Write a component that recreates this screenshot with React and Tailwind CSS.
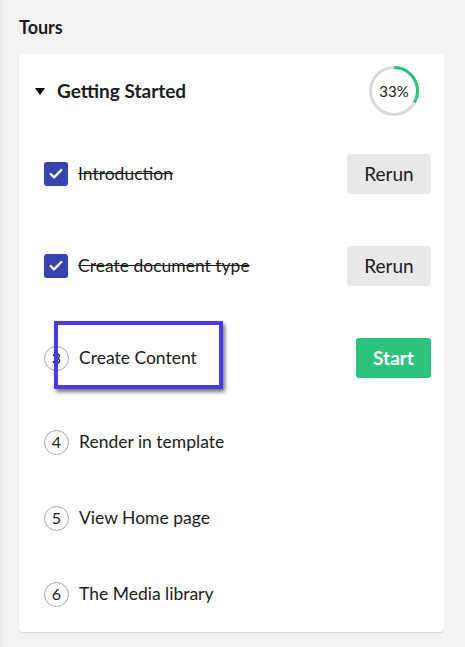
import { Check } from 'lucide-react';

const STEPS = [
  { n: 1, name: 'Introduction', done: true },
  { n: 2, name: 'Create document type', done: true },
  { n: 3, name: 'Create Content', next: true },
  { n: 4, name: 'Render in template' },
  { n: 5, name: 'View Home page' },
  { n: 6, name: 'The Media library' },
];

const Progress = ({ pct }) => {
  const r = 23.5;
  const c = 2 * Math.PI * r;
  return (
    <div className="relative w-[50px] h-[50px]">
      <svg width="50" height="50" viewBox="0 0 50 50" className="absolute inset-0 -rotate-90">
        <circle cx="25" cy="25" r={r} fill="none" stroke="#d8d7d9" strokeWidth="3" />
        <circle
          cx="25" cy="25" r={r} fill="none" stroke="#2bc37c" strokeWidth="3"
          strokeDasharray={`${(c * pct) / 100} ${c}`}
        />
      </svg>
      <span className="absolute inset-0 flex items-center justify-center text-[15px] text-[#1b1b1b]">{pct}%</span>
    </div>
  );
};

const StepRow = ({ step }) => (
  <div className={`flex items-center justify-between ${step.done || step.next ? 'h-[92px]' : 'h-[76px]'}`}>
    <div className="flex items-center gap-[10px]">
      {step.done ? (
        <span className="w-6 h-6 rounded-[3px] bg-[#3544b1] flex items-center justify-center">
          <Check className="w-4 h-4 text-white" strokeWidth={3.5} />
        </span>
      ) : (
        <span className="w-[25px] h-[25px] rounded-full border border-[#a8a8a8] flex items-center justify-center text-[16px] leading-none text-[#1b1b1b]">
          {step.n}
        </span>
      )}
      <span className={`text-[17.5px] leading-6 text-[#1b1b1b] ${step.done ? 'line-through' : ''}`}>{step.name}</span>
    </div>
    {step.done && (
      <button className="h-10 w-[84px] rounded-[3px] bg-[#e9e9eb] text-[19px] text-[#1b1b1b]">Rerun</button>
    )}
    {step.next && (
      <button className="h-10 w-[75px] rounded-[3px] bg-[#2bc37c] text-[19px] font-bold text-white">Start</button>
    )}
  </div>
);

export default function App() {
  return (
    <div
      className="min-h-[647px] w-[465px] bg-[linear-gradient(to_right,#e6e5e6,#f4f3f4_6px)] pl-[19px] pr-[21px] pt-[16px] pb-4"
      style={{ fontFamily: 'Lato, "Noto Sans", sans-serif' }}
    >
      <h2 className="text-[18px] leading-[22px] font-bold text-[#1b1b1b] mb-[16px]">Tours</h2>

      <div className="relative bg-white rounded-[4px] shadow-[0_1px_1px_rgba(0,0,0,0.12)]">
        {/* Group header */}
        <div className="h-[74px] flex items-center justify-between pl-4 pr-[25px]">
          <div className="flex items-center gap-3">
            <svg width="10" height="7" viewBox="0 0 10 7"><path d="M0 0h10L5 7z" fill="#000" /></svg>
            <span className="text-[19px] font-bold text-[#1b1b1b]">Getting Started</span>
          </div>
          <Progress pct={33} />
        </div>

        <div className="pl-[25px] pr-[13px]">
          {STEPS.map((s) => <StepRow key={s.n} step={s} />)}
        </div>

        {/* Tour highlight */}
        <div className="absolute left-[35px] top-[267px] w-[169px] h-[68px] border-4 border-[#4a3ae6] shadow-[2px_3px_4px_rgba(0,0,0,0.55)]" />
      </div>
    </div>
  );
}
